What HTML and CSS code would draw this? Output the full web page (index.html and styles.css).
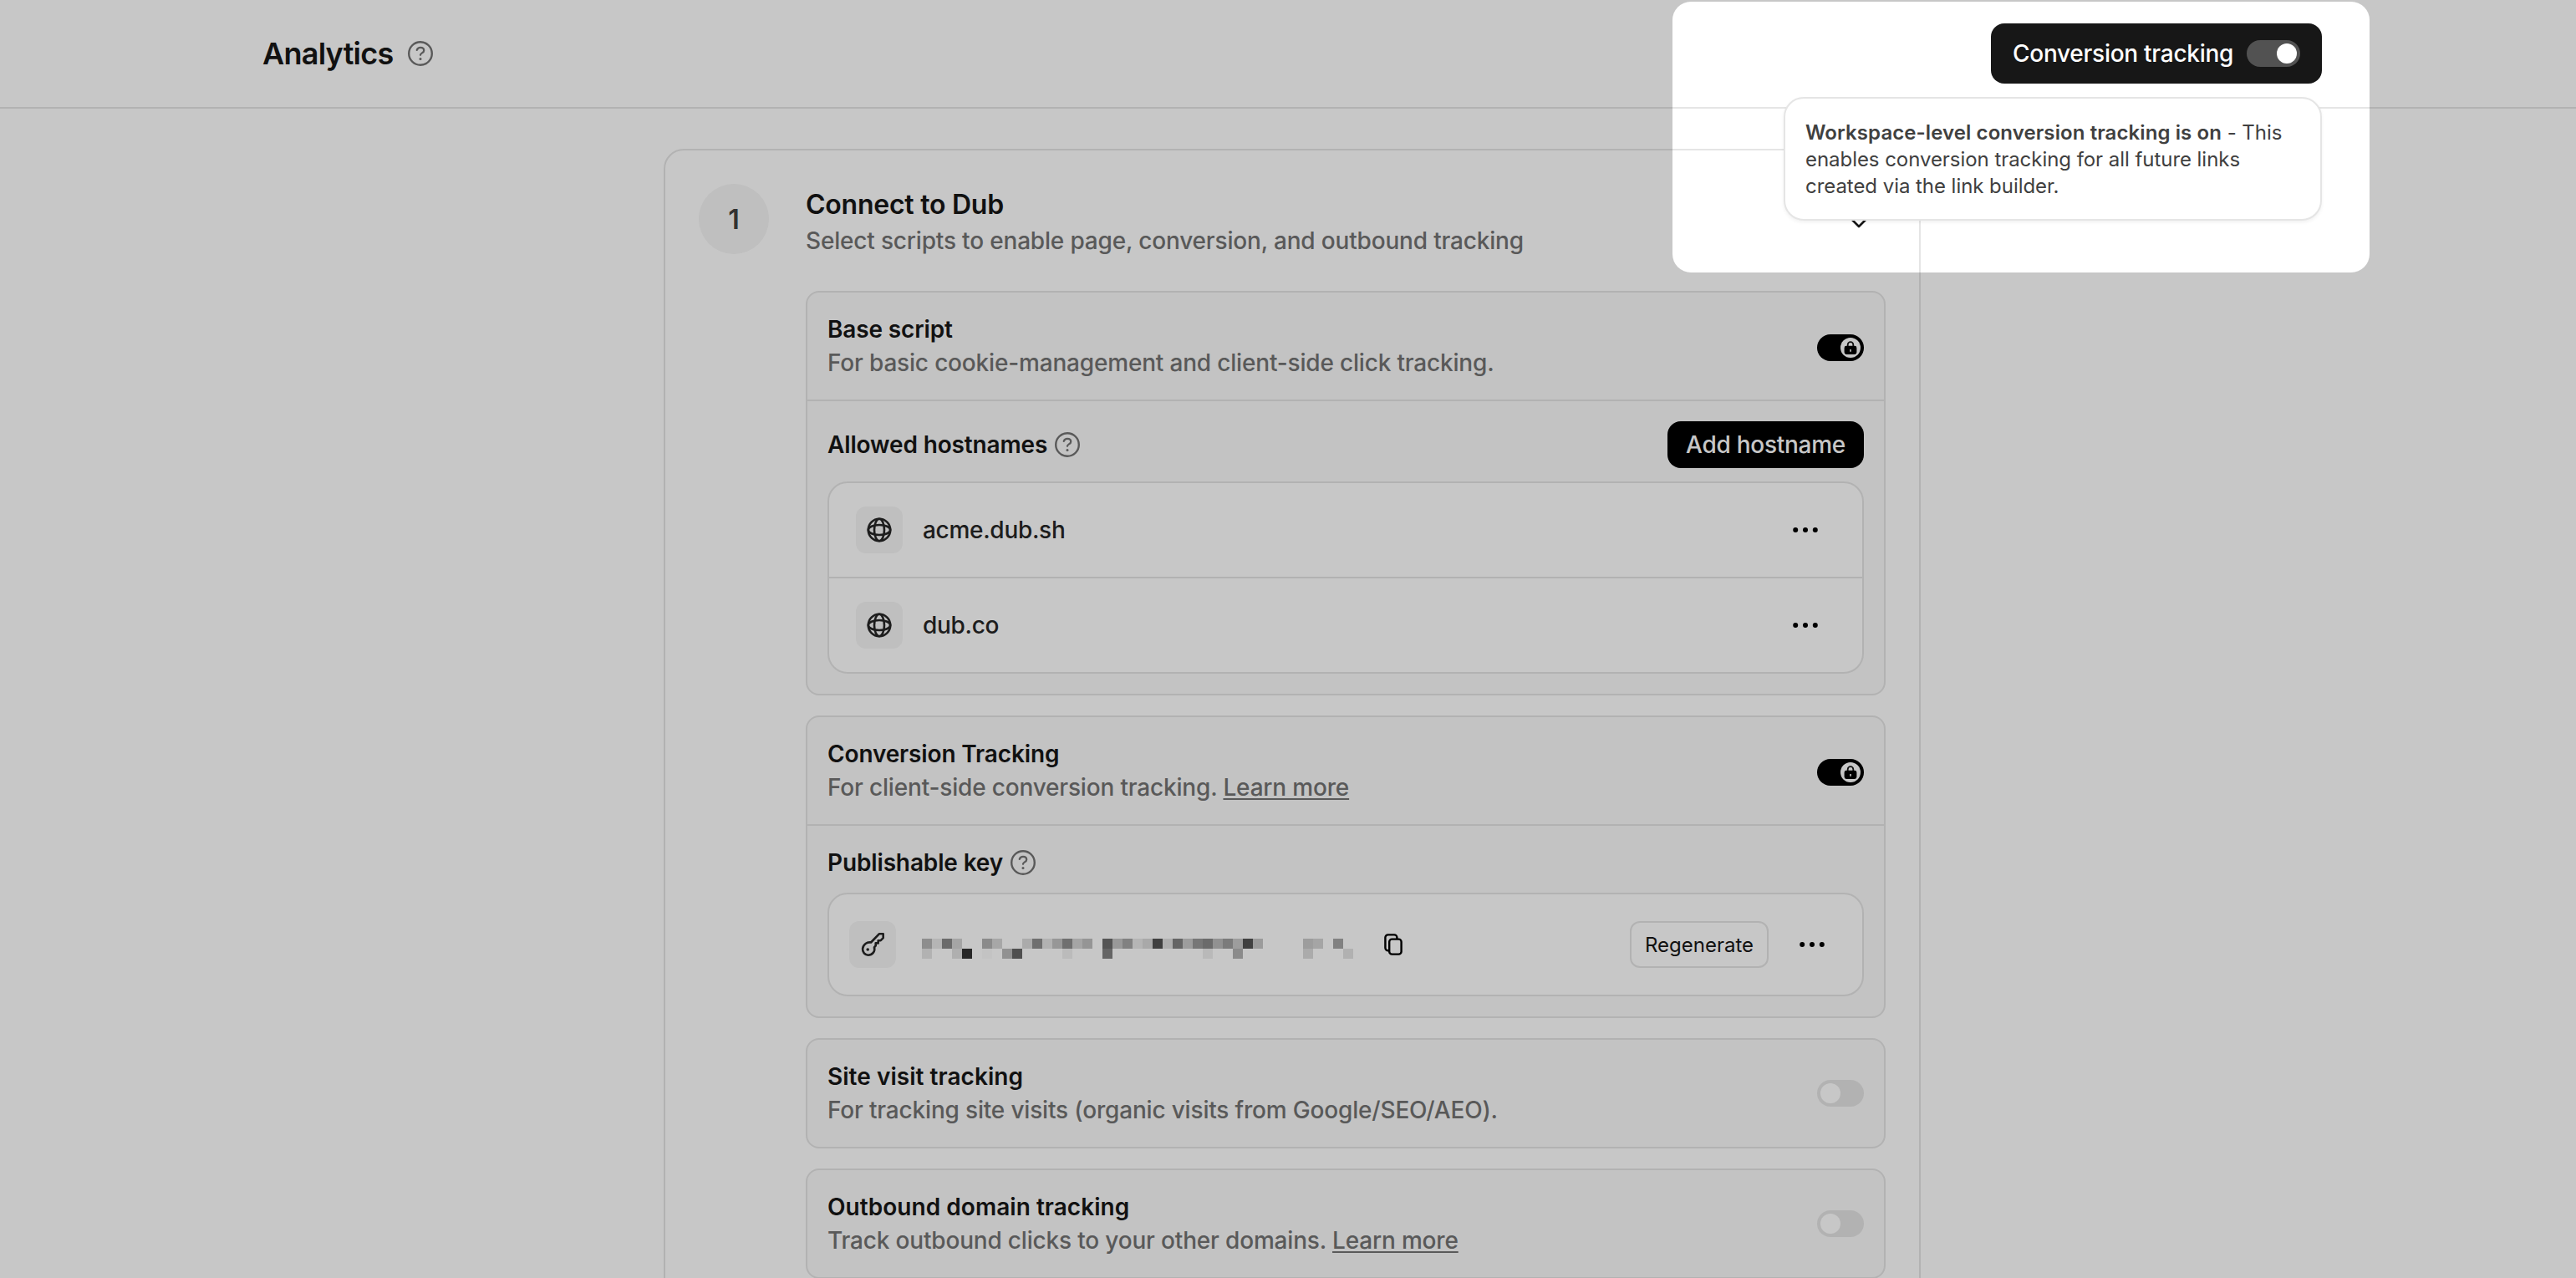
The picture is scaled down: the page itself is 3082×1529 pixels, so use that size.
FILE: index.html
```
<!DOCTYPE html>
<html lang="en">
<head>
<meta charset="UTF-8" />
<meta name="viewport" content="width=device-width, initial-scale=1" />
<title>Analytics</title>
<link rel="stylesheet" href="styles.css">
</head>
<body>
  <svg width="0" height="0" class="defs" aria-hidden="true">
    <symbol id="help" viewBox="0 0 30 30">
      <circle cx="15" cy="15" r="13.800" fill="none" stroke="currentColor" stroke-width="2.400" />
      <path d="M10.800 10.800c.7-2 2.200-2.900 4.200-2.900 2.500 0 4.200 1.400 4.200 3.500 0 3-4.200 2.900-4.200 5.400" fill="none" stroke="currentColor" stroke-width="2.300" stroke-linecap="round" />
      <circle cx="15" cy="21.500" r="1.500" fill="currentColor" />
    </symbol>
    <symbol id="globe" viewBox="0 0 30 30">
      <g fill="none" stroke="currentColor" stroke-width="2.600">
        <circle cx="15" cy="15" r="13.200" />
        <ellipse cx="15" cy="15" rx="6" ry="13.200" />
        <ellipse cx="15" cy="15" rx="13.200" ry="6" />
      </g>
    </symbol>
    <symbol id="dots" viewBox="0 0 30 6">
      <circle cx="3.200" cy="3" r="3" />
      <circle cx="15" cy="3" r="3" />
      <circle cx="26.800" cy="3" r="3" />
    </symbol>
    <symbol id="lock" viewBox="0 0 16 16">
      <path d="M4.700 7V4.400a3.300 3.300 0 0 1 6.600 0V7" fill="none" stroke="currentColor" stroke-width="1.800" />
      <path fill-rule="evenodd" d="M3 5.800h10a2.400 2.400 0 0 1 2.400 2.400v5.400a2.400 2.400 0 0 1-2.400 2.400H3a2.400 2.400 0 0 1-2.400-2.400V8.200A2.400 2.400 0 0 1 3 5.800zM7.200 10v2.800h1.600V10z" />
    </symbol>
  </svg>

  <header class="header">
    <div class="header-inner">
      <h1>Analytics <svg class="help"><use href="#help" /></svg></h1>
      <div class="tracking">
        <button class="tracking-btn">Conversion tracking <span class="pill"><i></i></span></button>
        <div class="popover"><strong>Workspace-level conversion tracking is on</strong> - This enables conversion tracking for all future links created via the link builder.</div>
      </div>
    </div>
  </header>

  <main class="step">
    <div class="step-number">1</div>
    <div class="step-content">
      <div class="step-head">
        <div>
          <h2>Connect to Dub</h2>
          <p>Select scripts to enable page, conversion, and outbound tracking</p>
        </div>
        <svg class="chevron" viewBox="0 0 24 14"><path d="M2 2l10 10L22 2" /></svg>
      </div>

      <section class="panel">
        <div class="panel-head">
          <div>
            <h3>Base script</h3>
            <p>For basic cookie-management and client-side click tracking.</p>
          </div>
          <span class="toggle on"><i><svg><use href="#lock" /></svg></i></span>
        </div>
        <div class="panel-body">
          <div class="label-row">
            <h3>Allowed hostnames <svg class="help"><use href="#help" /></svg></h3>
            <button class="add-btn">Add hostname</button>
          </div>
          <ul class="list">
            <li>
              <span class="icon-box"><svg class="globe"><use href="#globe" /></svg></span>
              <span class="host">acme.dub.sh</span>
              <button class="more"><svg><use href="#dots" /></svg></button>
            </li>
            <li>
              <span class="icon-box"><svg class="globe"><use href="#globe" /></svg></span>
              <span class="host">dub.co</span>
              <button class="more"><svg><use href="#dots" /></svg></button>
            </li>
          </ul>
        </div>
      </section>

      <section class="panel">
        <div class="panel-head">
          <div>
            <h3>Conversion Tracking</h3>
            <p>For client-side conversion tracking. <a>Learn more</a></p>
          </div>
          <span class="toggle on"><i><svg><use href="#lock" /></svg></i></span>
        </div>
        <div class="panel-body">
          <div class="label-row">
            <h3>Publishable key <svg class="help"><use href="#help" /></svg></h3>
          </div>
          <div class="list key">
            <span class="icon-box">
              <svg class="key-icon" viewBox="0 0 28 28"><path d="M26.700 1.300h-4.900L12 11.500c-4.500-.9-9.300 2.300-9.900 7.500-.3 4.300 2.600 7.700 6.500 7.700 5 0 8.800-4.300 7.400-9.300l1.700-2v-3h3V9.200h3l3-3.100z" /><circle cx="8.200" cy="20" r="1.800" /></svg>
            </span>
            <!-- pixelated key value -->
            <svg class="masked" viewBox="0 0 44 2" id="masked" shape-rendering="crispEdges"></svg>
            <svg class="copy" viewBox="0 0 22 26"><rect x="6.200" y="6.600" width="14.400" height="18" rx="3.200" /><path d="M4.800 20.200a3.200 3.200 0 0 1-3.400-3.200V4.600a3.200 3.200 0 0 1 3.200-3.200h7.600a3.200 3.200 0 0 1 3.200 3.200v1" /></svg>
            <button class="regen">Regenerate</button>
            <button class="more"><svg><use href="#dots" /></svg></button>
          </div>
        </div>
      </section>

      <section class="panel">
        <div class="panel-head">
          <div>
            <h3 class="wide">Site visit tracking</h3>
            <p>For tracking site visits (organic visits from Google/SEO/AEO).</p>
          </div>
          <span class="toggle"><i></i></span>
        </div>
      </section>

      <section class="panel">
        <div class="panel-head">
          <div>
            <h3 class="wide">Outbound domain tracking</h3>
            <p>Track outbound clicks to your other domains. <a>Learn more</a></p>
          </div>
          <span class="toggle"><i></i></span>
        </div>
      </section>
    </div>
  </main>

  <div class="spotlight"></div>

  <script>
    // [column, darkness] for the two rows of blocks
    const rows = [
      [[0,.29],[1,.09],[2,.46],[3,.17],[6,.3],[7,.16],[10,.14],[11,.44],[12,.1],[13,.24],[14,.44],[15,.17],[16,.25],[18,.57],[19,.23],[20,.35],[21,.09],[22,.15],[23,.68],[24,.12],[25,.49],[26,.21],[27,.4],[28,.46],[29,.27],[30,.38],[31,.21],[32,.68],[33,.22],[38,.21],[39,.17],[41,.35]],
      [[0,.1],[3,.12],[4,.8],[6,.02],[8,.27],[9,.6],[14,.06],[18,.49],[28,.07],[31,.3],[38,.14],[42,.11]]
    ];
    document.getElementById('masked').innerHTML = rows.map((cells, y) =>
      cells.map(([x, a]) => `<rect x="${x}" y="${y}" width="1" height="1" fill-opacity="${a}" />`).join('')
    ).join('');
  </script>
</body>
</html>
```
FILE: styles.css
```
* {
  box-sizing: border-box;
}
body {
  margin: 0;
  height: 1529px;
  overflow: hidden;
  padding-left: 10px;
  background: white;
  color: #171717;
  font-family: Inter, 'Liberation Sans', sans-serif;
  font-size: 28px;
  line-height: 40px;
}
h1, h2, h3, p, ul {
  margin: 0;
  padding: 0;
}
button {
  font-family: inherit;
  border: none;
  padding: 0;
  white-space: nowrap;
}
.defs {
  position: absolute;
}
.help {
  width: 30px;
  height: 30px;
  color: #737373;
}

/* header */
.header {
  height: 130px;
  margin-left: -10px;
  padding-left: 10px;
  border-bottom: 2px solid #e5e5e5;
}
.header-inner {
  width: 2464px;
  height: 128px;
  margin: 0 auto;
  display: flex;
  align-items: center;
  justify-content: space-between;
}
h1 {
  display: flex;
  align-items: center;
  gap: 17px;
  font-size: 36px;
  font-weight: 600;
  letter-spacing: -0.75px;
}
.tracking {
  position: relative;
}
.tracking-btn {
  display: flex;
  align-items: center;
  justify-content: space-between;
  width: 396px;
  height: 72px;
  padding: 0 26px;
  border-radius: 16px;
  background: #171717;
  color: white;
  font-size: 28px;
  font-weight: 500;
  letter-spacing: -0.27px;
}
.pill {
  display: flex;
  justify-content: flex-end;
  width: 64px;
  height: 32px;
  padding: 4px;
  border-radius: 16px;
  background: #525252;
}
.pill i {
  width: 24px;
  height: 24px;
  border-radius: 50%;
  background: white;
}
.popover {
  position: absolute;
  top: 88px;
  right: 0;
  z-index: 2;
  width: 644px;
  padding: 25px 24px 23px;
  border: 2px solid #e5e5e5;
  border-radius: 24px;
  background: white;
  box-shadow: 0 2px 4px rgb(0 0 0 / 0.06);
  color: #404040;
  font-size: 24px;
  line-height: 32px;
  letter-spacing: -0.05px;
}
.popover strong {
  font-weight: 600;
  letter-spacing: 0.09px;
}

/* step card */
.step {
  display: flex;
  gap: 44px;
  width: 1504px;
  height: 1500px;
  margin: 48px auto 0;
  padding: 40px;
  border: 2px solid #e5e5e5;
  border-radius: 24px;
}
.step-number {
  flex: none;
  width: 84px;
  height: 84px;
  border-radius: 50%;
  background: #f5f5f5;
  color: #404040;
  font-size: 32px;
  font-weight: 600;
  line-height: 86px;
  text-align: center;
}
.step-content {
  flex: 1;
  display: flex;
  flex-direction: column;
  gap: 24px;
}
.step-head {
  display: flex;
  align-items: center;
  justify-content: space-between;
  height: 88px;
  margin-bottom: 16px;
  padding-right: 20px;
}
h2 {
  padding-top: 1px;
  font-size: 32px;
  font-weight: 600;
  line-height: 47px;
  letter-spacing: -0.25px;
}
p {
  color: #737373;
  font-weight: 500;
  letter-spacing: -0.18px;
}
p a {
  text-decoration: underline;
  text-decoration-thickness: 2px;
  text-underline-offset: 3px;
}
.chevron {
  width: 24px;
  height: 14px;
  margin-top: 4px;
  fill: none;
  stroke: #171717;
  stroke-width: 2.6;
  stroke-linecap: round;
  stroke-linejoin: round;
}

/* panels */
.panel {
  flex: none;
  border: 2px solid #e5e5e5;
  border-radius: 16px;
  background: #fafafa;
}
.panel-head {
  display: flex;
  align-items: center;
  justify-content: space-between;
  height: 128px;
  padding: 24px;
}
h3 {
  display: flex;
  align-items: center;
  gap: 9px;
  font-size: 28px;
  font-weight: 600;
  letter-spacing: -0.14px;
}
h3.wide {
  letter-spacing: 0.04px;
}
.toggle {
  display: flex;
  width: 56px;
  height: 32px;
  padding: 4px;
  border-radius: 16px;
  background: #e5e5e5;
}
.toggle i {
  display: flex;
  align-items: center;
  justify-content: center;
  width: 24px;
  height: 24px;
  border-radius: 50%;
  background: white;
}
.toggle.on {
  justify-content: flex-end;
  margin-top: 4px;
  background: black;
}
.toggle svg {
  width: 16px;
  height: 16px;
}
.panel-body {
  padding: 24px;
  border-top: 2px solid #e5e5e5;
}
.label-row {
  display: flex;
  align-items: center;
  justify-content: space-between;
  margin-bottom: 16px;
}
.add-btn {
  width: 235px;
  height: 56px;
  border-radius: 16px;
  background: black;
  color: white;
  font-size: 28px;
  font-weight: 500;
  letter-spacing: -0.27px;
}
.list {
  border: 2px solid #e5e5e5;
  border-radius: 24px;
  background: white;
  list-style: none;
}
.list li {
  display: flex;
  align-items: center;
  height: 112px;
  padding: 0 32px;
}
.list li + li {
  height: 114px;
  border-top: 2px solid #e5e5e5;
}
.icon-box {
  display: flex;
  align-items: center;
  justify-content: center;
  width: 56px;
  height: 56px;
  margin-right: 24px;
  border-radius: 12px;
  background: #f5f5f5;
  color: #262626;
}
.globe {
  width: 30px;
  height: 30px;
}
.host {
  flex: 1;
  color: #262626;
  font-weight: 500;
  letter-spacing: -0.3px;
}
.more {
  display: flex;
  align-items: center;
  justify-content: center;
  width: 72px;
  height: 56px;
  background: none;
}
.more svg {
  width: 30px;
  height: 6px;
}
.key {
  display: flex;
  align-items: center;
  height: 124px;
  padding: 0 24px;
}
.key-icon {
  width: 28px;
  height: 28px;
  fill: none;
  stroke: #262626;
  stroke-width: 2.6;
  stroke-linejoin: round;
}
.key-icon circle {
  fill: #262626;
  stroke: none;
}
.masked {
  width: 528px;
  height: 24px;
  margin: 10px 25px 0 7px;
}
.copy {
  width: 22px;
  height: 26px;
  fill: none;
  stroke: black;
  stroke-width: 2.4;
  stroke-linecap: round;
}
.regen {
  width: 166px;
  height: 56px;
  margin: 0 16px 0 auto;
  border: 2px solid #e5e5e5;
  border-radius: 12px;
  background: white;
  color: #171717;
  font-size: 24px;
}

/* dims everything except the highlighted area */
.spotlight {
  position: absolute;
  top: 2px;
  left: 2001px;
  z-index: 10;
  width: 834px;
  height: 324px;
  border-radius: 22px;
  box-shadow: 0 0 0 4000px rgb(0 0 0 / 0.22);
}
```
